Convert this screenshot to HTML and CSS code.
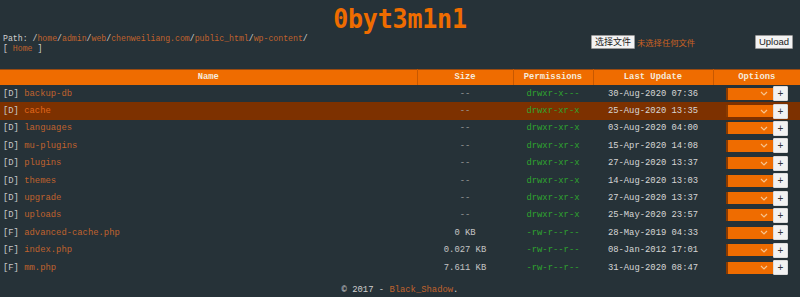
FILE: index.html
```html
<!DOCTYPE html>
<html>
<head>
<meta charset="utf-8">
<title>0byt3m1n1</title>
<link rel="stylesheet" href="styles.css">
</head>
<body>
<header class="title"><span class="logo">0byt3m1n1</span></header>
<div class="bar">
  <div class="path">
    <div>Path: /<a href="#">home</a>/<a href="#">admin</a>/<a href="#">web</a>/<a href="#">chenweiliang.com</a>/<a href="#">public_html</a>/<a href="#">wp-content</a>/</div>
    <div>[ <a href="#">Home</a> ]</div>
  </div>
  <form class="upload">
    <span class="file"><span class="btn">选择文件</span><span class="none">未选择任何文件</span></span>
    <span class="btn up">Upload</span>
  </form>
</div>
<table class="files">
  <colgroup><col class="c-name"><col class="c-size"><col class="c-perm"><col class="c-date"><col class="c-opt"></colgroup>
  <thead>
    <tr><th>Name</th><th>Size</th><th>Permissions</th><th>Last Update</th><th>Options</th></tr>
  </thead>
  <tbody>
    <tr><td class="name"><span class="t">[D]</span> <a href="#">backup-db</a></td><td class="size dim">--</td><td class="perm">drwxr-x---</td><td class="date">30-Aug-2020 07:36</td><td><div class="opt"><span class="sel"><svg width="8" height="5" viewBox="0 0 8 5"><path d="M1 1l3 3 3-3" fill="none" stroke="#f7c48f" stroke-width="1.2"/></svg></span><span class="plus">+</span></div></td></tr>
    <tr class="hl"><td class="name"><span class="t">[D]</span> <a href="#">cache</a></td><td class="size dim">--</td><td class="perm">drwxr-xr-x</td><td class="date">25-Aug-2020 13:35</td><td><div class="opt"><span class="sel"><svg width="8" height="5" viewBox="0 0 8 5"><path d="M1 1l3 3 3-3" fill="none" stroke="#f7c48f" stroke-width="1.2"/></svg></span><span class="plus">+</span></div></td></tr>
    <tr><td class="name"><span class="t">[D]</span> <a href="#">languages</a></td><td class="size dim">--</td><td class="perm">drwxr-xr-x</td><td class="date">03-Aug-2020 04:00</td><td><div class="opt"><span class="sel"><svg width="8" height="5" viewBox="0 0 8 5"><path d="M1 1l3 3 3-3" fill="none" stroke="#f7c48f" stroke-width="1.2"/></svg></span><span class="plus">+</span></div></td></tr>
    <tr><td class="name"><span class="t">[D]</span> <a href="#">mu-plugins</a></td><td class="size dim">--</td><td class="perm">drwxr-xr-x</td><td class="date">15-Apr-2020 14:08</td><td><div class="opt"><span class="sel"><svg width="8" height="5" viewBox="0 0 8 5"><path d="M1 1l3 3 3-3" fill="none" stroke="#f7c48f" stroke-width="1.2"/></svg></span><span class="plus">+</span></div></td></tr>
    <tr><td class="name"><span class="t">[D]</span> <a href="#">plugins</a></td><td class="size dim">--</td><td class="perm">drwxr-xr-x</td><td class="date">27-Aug-2020 13:37</td><td><div class="opt"><span class="sel"><svg width="8" height="5" viewBox="0 0 8 5"><path d="M1 1l3 3 3-3" fill="none" stroke="#f7c48f" stroke-width="1.2"/></svg></span><span class="plus">+</span></div></td></tr>
    <tr><td class="name"><span class="t">[D]</span> <a href="#">themes</a></td><td class="size dim">--</td><td class="perm">drwxr-xr-x</td><td class="date">14-Aug-2020 13:03</td><td><div class="opt"><span class="sel"><svg width="8" height="5" viewBox="0 0 8 5"><path d="M1 1l3 3 3-3" fill="none" stroke="#f7c48f" stroke-width="1.2"/></svg></span><span class="plus">+</span></div></td></tr>
    <tr><td class="name"><span class="t">[D]</span> <a href="#">upgrade</a></td><td class="size dim">--</td><td class="perm">drwxr-xr-x</td><td class="date">27-Aug-2020 13:37</td><td><div class="opt"><span class="sel"><svg width="8" height="5" viewBox="0 0 8 5"><path d="M1 1l3 3 3-3" fill="none" stroke="#f7c48f" stroke-width="1.2"/></svg></span><span class="plus">+</span></div></td></tr>
    <tr><td class="name"><span class="t">[D]</span> <a href="#">uploads</a></td><td class="size dim">--</td><td class="perm">drwxr-xr-x</td><td class="date">25-May-2020 23:57</td><td><div class="opt"><span class="sel"><svg width="8" height="5" viewBox="0 0 8 5"><path d="M1 1l3 3 3-3" fill="none" stroke="#f7c48f" stroke-width="1.2"/></svg></span><span class="plus">+</span></div></td></tr>
    <tr><td class="name"><span class="t">[F]</span> <a href="#">advanced-cache.php</a></td><td class="size">0 KB</td><td class="perm">-rw-r--r--</td><td class="date">28-May-2019 04:33</td><td><div class="opt"><span class="sel"><svg width="8" height="5" viewBox="0 0 8 5"><path d="M1 1l3 3 3-3" fill="none" stroke="#f7c48f" stroke-width="1.2"/></svg></span><span class="plus">+</span></div></td></tr>
    <tr><td class="name"><span class="t">[F]</span> <a href="#">index.php</a></td><td class="size">0.027 KB</td><td class="perm">-rw-r--r--</td><td class="date">08-Jan-2012 17:01</td><td><div class="opt"><span class="sel"><svg width="8" height="5" viewBox="0 0 8 5"><path d="M1 1l3 3 3-3" fill="none" stroke="#f7c48f" stroke-width="1.2"/></svg></span><span class="plus">+</span></div></td></tr>
    <tr><td class="name"><span class="t">[F]</span> <a href="#">mm.php</a></td><td class="size">7.611 KB</td><td class="perm">-rw-r--r--</td><td class="date">31-Aug-2020 08:47</td><td><div class="opt"><span class="sel"><svg width="8" height="5" viewBox="0 0 8 5"><path d="M1 1l3 3 3-3" fill="none" stroke="#f7c48f" stroke-width="1.2"/></svg></span><span class="plus">+</span></div></td></tr>
  </tbody>
</table>
<footer class="foot">© 2017 - <a href="#">Black_Shadow</a>.</footer>
</body>
</html>
```

FILE: styles.css
```css
html, body {
  margin: 0;
  padding: 0;
  background: #263238;
  color: #cfcfcf;
  font-family: "Liberation Mono", "Courier New", monospace;
}
a {
  color: #c0622d;
  text-decoration: none;
}
.title {
  padding-top: 7px;
  height: 26px;
  text-align: center;
  font-family: "DejaVu Sans Mono", monospace;
  font-weight: bold;
  font-size: 25px;
  line-height: 26px;
  color: #ef6c00;
  letter-spacing: -0.2px;
}
.logo {
  display: inline-block;
  transform: scaleY(1.08);
  transform-origin: 50% 80%;
}
.bar {
  display: flex;
  justify-content: space-between;
  align-items: flex-start;
  padding: 1px 7px 0 3px;
  height: 35px;
}
.path {
  font-size: 8.2px;
  line-height: 10px;
  color: #cfcfcf;
}
.upload {
  display: flex;
  align-items: center;
  margin: 0;
  width: 202px;
  justify-content: space-between;
}
.file {
  display: flex;
  align-items: center;
  gap: 2px;
}
.btn {
  display: inline-block;
  background: #f3f3f3;
  color: #222;
  border: 1px solid #9a9a9a;
  font-family: "Noto Sans CJK SC", "Liberation Sans", sans-serif;
  font-size: 9px;
  line-height: 12px;
  padding: 0 3px;
  border-radius: 1px;
}
.btn.up {
  font-family: "Liberation Sans", Arial, sans-serif;
  font-size: 9.5px;
  padding: 0 3px;
  margin-top: 1px;
}
.none {
  color: #cc6222;
  font-family: "Noto Sans CJK SC", sans-serif;
  font-size: 8.3px;
  line-height: 12px;
}
.files {
  width: 100%;
  border-collapse: collapse;
  table-layout: fixed;
  font-size: 8.85px;
}
.c-name { width: 417px; }
.c-size { width: 96px; }
.c-perm { width: 80px; }
.c-date { width: 120px; }
.c-opt { width: 87px; }
.files th {
  background: #ef6c00;
  color: #f6eadc;
  font-weight: bold;
  height: 15px;
  padding: 0;
  border-top: 1px solid #9a4a10;
  border-left: 1px solid #c75800;
  border-right: 1px solid #c75800;
  line-height: 15px;
}
.files th:first-child { border-left: none; }
.files th:last-child { border-right: none; }
.files td {
  height: 17.4px;
  padding: 0;
  line-height: 10px;
  white-space: nowrap;
}
.files tr.hl td {
  background: #7d3100;
}
.files tr.hl a {
  color: #e3681c;
}
.files td.name {
  padding-left: 3px;
}
.name .t {
  color: #c8c8c8;
}
.size {
  text-align: center;
  color: #c4c4c4;
}
.size.dim {
  color: #9a9a9a;
}
.perm {
  text-align: center;
  color: #2fa52f;
}
.date {
  text-align: center;
  color: #d6d6d6;
}
.opt {
  display: flex;
  align-items: center;
  padding-left: 13px;
}
.sel {
  display: flex;
  align-items: center;
  justify-content: flex-end;
  box-sizing: border-box;
  width: 47px;
  height: 12px;
  background: #ef6c00;
  border-left: 2px solid #8a3a00;
  padding-right: 5px;
}
.plus {
  display: block;
  width: 15px;
  height: 15px;
  background: #f2f2f2;
  color: #333;
  font-family: "Liberation Sans", Arial, sans-serif;
  font-size: 10px;
  line-height: 14px;
  text-align: center;
  box-sizing: border-box;
  border: 1px solid #dcdcdc;
  border-radius: 1px;
}
.foot {
  text-align: center;
  font-size: 8.85px;
  line-height: 10px;
  margin-top: 9px;
  color: #cfcfcf;
}
```
